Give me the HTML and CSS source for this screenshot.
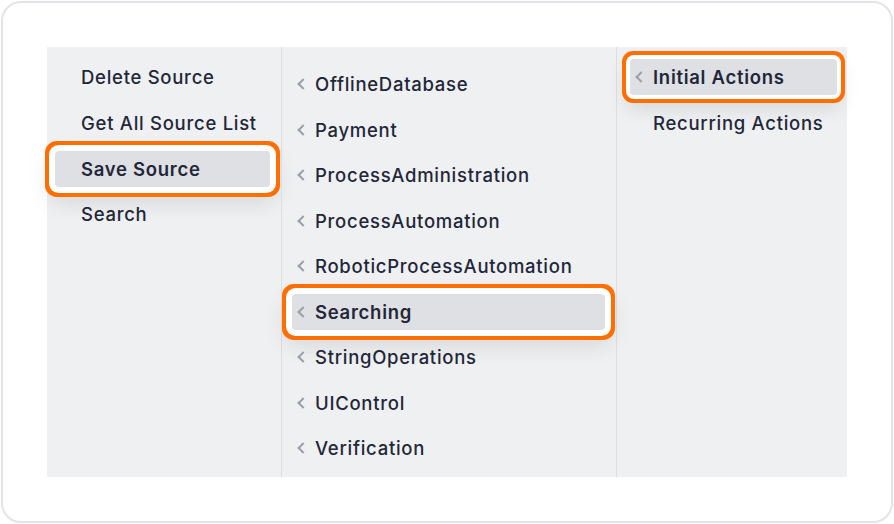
FILE: index.html
```html
<!DOCTYPE html>
<html>
<head>
<meta charset="utf-8">
<link rel="stylesheet" href="styles.css">
</head>
<body>
<div class="card">
  <div class="panel">
    <div class="col col1">
      <div class="item"><span class="chev hidden"></span><span class="label">Delete Source</span></div>
      <div class="item"><span class="chev hidden"></span><span class="label">Get All Source List</span></div>
      <div class="item active ring-lg"><span class="chev hidden"></span><span class="label">Save Source</span></div>
      <div class="item"><span class="chev hidden"></span><span class="label">Search</span></div>
    </div>
    <div class="col col2">
      <div class="item"><span class="chev"></span><span class="label">OfflineDatabase</span></div>
      <div class="item"><span class="chev"></span><span class="label">Payment</span></div>
      <div class="item"><span class="chev"></span><span class="label">ProcessAdministration</span></div>
      <div class="item"><span class="chev"></span><span class="label">ProcessAutomation</span></div>
      <div class="item"><span class="chev"></span><span class="label">RoboticProcessAutomation</span></div>
      <div class="item active ring-lg"><span class="chev"></span><span class="label">Searching</span></div>
      <div class="item"><span class="chev"></span><span class="label">StringOperations</span></div>
      <div class="item"><span class="chev"></span><span class="label">UIControl</span></div>
      <div class="item"><span class="chev"></span><span class="label">Verification</span></div>
    </div>
    <div class="col col3">
      <div class="item active ring-sm"><span class="chev"></span><span class="label">Initial Actions</span></div>
      <div class="item"><span class="chev hidden"></span><span class="label">Recurring Actions</span></div>
    </div>
  </div>
</div>
</body>
</html>
```

FILE: styles.css
```css
html, body {
  margin: 0;
  padding: 0;
  background: #ffffff;
}
body {
  font-family: Inter, "Noto Sans", sans-serif;
}
.card {
  margin: 1px;
  width: 892px;
  height: 522px;
  box-sizing: border-box;
  border: 2px solid #e2e4e8;
  border-radius: 20px;
  padding: 44px;
  background: #ffffff;
}
.panel {
  display: flex;
  width: 800px;
  height: 430px;
  background: #eff0f2;
}
.col {
  display: flex;
  flex-direction: column;
  gap: 9.5px;
  box-sizing: border-box;
}
.col1 {
  width: 234px;
  padding: 12px 11px 0 8px;
  gap: 9.8px;
}
.col2 {
  width: 336px;
  border-left: 1px solid #dcdee2;
  border-right: 1px solid #dcdee2;
  padding: 19px 11px 0 10px;
}
.col3 {
  width: 230px;
  padding: 12px 10px 0 13px;
  gap: 9.8px;
}
.item {
  height: 36px;
  display: flex;
  align-items: center;
  padding-left: 5px;
  border-radius: 5px;
  color: #1f2739;
  font-size: 18.5px;
  font-weight: 500;
  letter-spacing: 0.72px;
  white-space: nowrap;
}
.chev {
  width: 18px;
  height: 36px;
  flex: none;
  position: relative;
}
.chev::before {
  content: "";
  position: absolute;
  left: 2px;
  top: 14px;
  width: 6px;
  height: 6px;
  border-left: 2px solid #9ba0a8;
  border-bottom: 2px solid #9ba0a8;
  transform: rotate(45deg);
}
.chev.hidden::before {
  display: none;
}
.col1 .chev {
  width: 21px;
}
.item.active {
  background: #dfe0e4;
  font-weight: 600;
}
.ring-lg {
  box-shadow: 0 0 0 6px #ffffff, 0 0 0 10px #ff6e00, 0 10px 22px 6px rgba(0, 0, 0, 0.10);
  border-radius: 4px;
}
.ring-sm {
  box-shadow: 0 0 0 4px #ffffff, 0 0 0 8px #ff6e00, 0 10px 20px 4px rgba(0, 0, 0, 0.10);
  border-radius: 4px;
}
```
